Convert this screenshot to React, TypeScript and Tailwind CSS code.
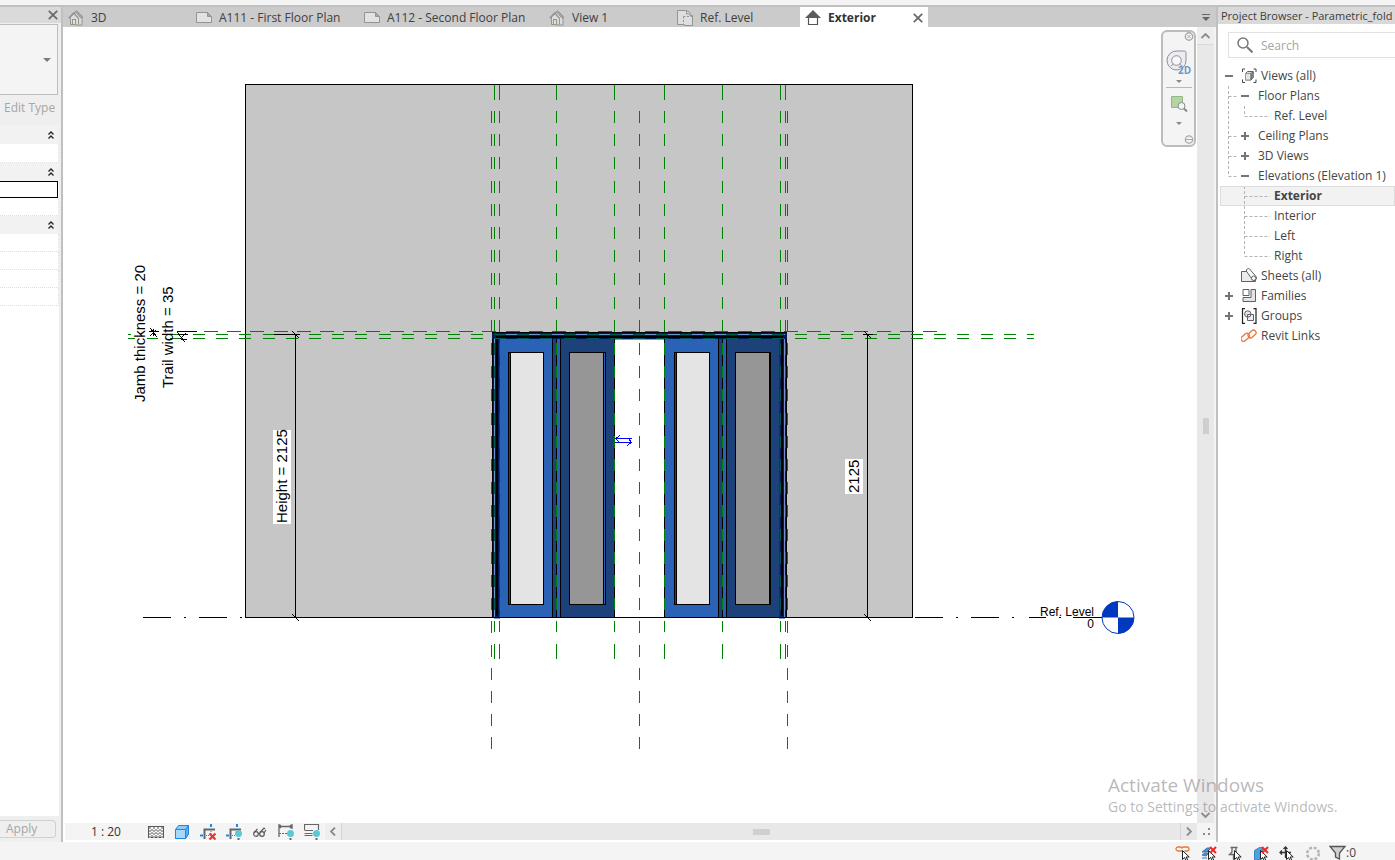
import React, { useState } from 'react';

type TabIcon = 'home' | 'sheet' | 'plan' | 'elevation';

interface ViewTab {
  name: string;
  icon: TabIcon;
  width: string;
}

const tabs: ViewTab[] = [
  { name: '3D', icon: 'home', width: 'w-32' },
  { name: 'A111 - First Floor Plan', icon: 'sheet', width: 'w-[168px]' },
  { name: 'A112 - Second Floor Plan', icon: 'sheet', width: 'w-[185px]' },
  { name: 'View 1', icon: 'home', width: 'w-32' },
  { name: 'Ref. Level', icon: 'plan', width: 'w-32' },
  { name: 'Exterior', icon: 'elevation', width: 'w-32' },
];

const TabGlyph = ({ icon }: { icon: TabIcon }) => {
  if (icon === 'home') {
    return (
      <svg width="16" height="16" viewBox="0 0 16 16" fill="none" stroke="#949494">
        <path d="M2.500 7v7.500h5V15h6.500V6.500L9 1 2.500 7z" fill="#dcdcdc" />
        <path d="M5 4 8.500.8 14.800 7l-1.600 1.200L8 2.500z" fill="#ababab" />
        <path d="M.7 8.200 5.500 3l5 5.200" strokeWidth="1.300" />
        <path d="M10.500 8v6.500" />
        <rect x="4.500" y="9.500" width="3" height="5" fill="#f5deb0" />
      </svg>
    );
  }
  if (icon === 'sheet') {
    return (
      <svg width="16" height="16" viewBox="0 0 16 16" fill="none" stroke="#949494">
        <path d="M.5 2.500h11l4 4v6H.5z" fill="#e2e2e2" />
        <path d="M11.500 2.500v4h4z" fill="#a4a4a4" />
      </svg>
    );
  }
  if (icon === 'plan') {
    return (
      <svg width="16" height="16" viewBox="0 0 16 16" fill="none" stroke="#949494">
        <path d="M.5.500h9l3.500 2v3h2.500v10h-8v-1h-7z" fill="#dedede" />
        <path d="M6.500 6.500h9M6.500 6.500v8" strokeDasharray="2 1.500" />
        <path d="M9.500 1v3h3" />
      </svg>
    );
  }
  return (
    <svg width="16" height="16" viewBox="0 0 16 16" fill="none">
      <path d="M3.500 7.500h9v7h-9z" fill="#fff" stroke="#555" strokeWidth="1.200" />
      <path d="M8 0l8 8H0z" fill="#5c5c5c" />
    </svg>
  );
};

const Cross = ({ color = '#6a6a6a' }: { color?: string }) => (
  <svg width="10" height="10" viewBox="0 0 10 10" stroke={color} strokeWidth="1.800">
    <path d="M.8.800l8.400 8.400M9.200.800.800 9.200" />
  </svg>
);

const DoubleChevron = () => (
  <svg width="6" height="8" viewBox="0 0 6 8" fill="none" stroke="#222" strokeWidth="1.300">
    <path d="M.5 3.500 3 1l2.500 2.500M.5 7.500 3 5l2.500 2.500" />
  </svg>
);

const Caret = () => (
  <svg width="8" height="4" viewBox="0 0 8 4" fill="#7c7c7c">
    <path d="M0 0h8L4 4z" />
  </svg>
);

const GroupHeader = ({ label }: { label: string }) => (
  <button aria-label={label} className="w-full h-[18px] bg-[#f2f2f2] flex items-center justify-end pr-[5px]">
    <DoubleChevron />
  </button>
);

const PropertiesPanel = () => (
  <aside className="w-[61px] shrink-0 bg-[#efefef] flex flex-col">
    <div className="h-4 bg-[#dadada] flex items-center justify-end pr-[3px]">
      <button aria-label="Close properties"><Cross /></button>
    </div>
    <div className="h-[71px] mr-[3px] mt-px border border-l-0 border-[#bdbdbd] bg-[#f4f4f4] flex items-center justify-end pr-[6px]">
      <button aria-label="Type selector"><Caret /></button>
    </div>
    <div className="h-[30px] pl-1 pb-1 flex items-center text-[#a6a6a6] whitespace-nowrap">
      <button>Edit Type</button>
    </div>
    <div className="flex-1 mr-0.5 bg-white border-t border-t-[#f2f2f2]">
      <GroupHeader label="Constraints" />
      <div className="h-[19px] border-b border-r border-dotted border-[#dedede]" />
      <GroupHeader label="Graphics" />
      <input aria-label="Value" className="block w-[58px] h-[17px] border border-l-0 border-black bg-white outline-none px-1" />
      <div className="h-[18px] border-b border-r border-dotted border-[#dedede]" />
      <GroupHeader label="Identity Data" />
      {[0, 1, 2, 3].map(row => (
        <div key={row} className="h-[18px] border-b border-r border-dotted border-[#dedede]" />
      ))}
    </div>
    <div className="h-[26px] pt-1 pr-[5px]">
      <button className="w-full h-[18px] border border-l-0 border-[#d0d0d0] rounded-r-sm flex items-center pl-[6px] text-[#a6a6a6]">
        Apply
      </button>
    </div>
  </aside>
);

const GREEN = '#008000';
const planeXs = [494, 499, 556, 614, 664, 722, 780, 785];
const centerXs = [491, 639, 787];

// One pair of leaves, shifted to its own side of the opening
const LeafPair = ({ dx }: { dx: number }) => (
  <g transform={`translate(${dx} 0)`}>
    <rect x="499" y="339" width="53" height="278" fill="#2a62b6" />
    <rect x="552" y="339" width="9" height="278" fill="#1e4278" />
    <rect x="557" y="339" width="3" height="278" fill="#2a62b6" />
    <rect x="561" y="339" width="53" height="278" fill="#1d4179" />
    <path d="M552.500 339V617M556.500 339V617M560.500 339V617" stroke="#000" />
    <rect x="508.500" y="352.500" width="35" height="252" fill="#1d4179" stroke="#000" />
    <rect x="510.500" y="352.500" width="33" height="252" fill="#e4e4e4" stroke="#000" />
    <rect x="569.500" y="352.500" width={dx ? 35 : 36} height="252" fill="#2a62b6" stroke="#000" />
    <rect x="569.500" y="352.500" width="34" height="252" fill="#969696" stroke="#000" />
  </g>
);

const Jamb = ({ x, flip }: { x: number; flip?: boolean }) => (
  <g transform={flip ? `translate(${x} 0) scale(-1 1)` : `translate(${x} 0)`}>
    <rect x="0" y="332" width="8" height="286" fill="#001c5c" />
    <rect x="0" y="332" width="1" height="285" fill="#000" />
    <rect x="2" y="334" width="1" height="284" fill="#6f8fd0" />
    <rect x="4" y="336" width="2" height="280" fill="#000" />
    <rect x="7" y="339" width="1" height="279" fill="#0a2f92" />
    <rect x="2" y="618" width="6" height="1" fill="#7a94d8" />
  </g>
);

const ElevationDrawing = () => (
  <svg
    viewBox="63 27 1134 796"
    className="block w-full h-full"
    fontFamily='"Liberation Sans", Arial, sans-serif'
    shapeRendering="crispEdges"
    role="img"
    aria-label="Exterior elevation"
  >
    <rect x="245.500" y="84.500" width="667" height="533" fill="#c6c6c6" stroke="#000" />
    <rect x="615" y="339" width="49" height="278" fill="#fff" />

    {/* Door leaves and frame */}
    <LeafPair dx={0} />
    <LeafPair dx={166} />
    <path d="M614.500 339V617M664.500 339V617" stroke="#000" />
    <Jamb x={492} />
    <Jamb x={787} flip />
    <rect x="492" y="332" width="295" height="7" fill="#001c5c" />
    <path d="M492 332.500H787" stroke="#000" />
    <rect x="496" y="336" width="287" height="2" fill="#000" />
    <path d="M494 334.500H785" stroke="#6f8fd0" />
    <path d="M615 339.500H664" stroke="#8496dc" />
    <path d="M494 334.500H785M494 338.500H785" stroke="#005a5a" strokeDasharray="12 11.200" />

    {/* Reference planes */}
    <g stroke={GREEN}>
      {planeXs.map(x => (
        <path key={x} d={`M${x + 0.5} 85V100M${x + 0.5} 644V659`} />
      ))}
      {planeXs.map(x => (
        <path key={`d${x}`} d={`M${x + 0.5} 111V332`} strokeDasharray="12 11.200" />
      ))}
      {planeXs.map(x => (
        <path
          key={`b${x}`}
          d={`M${x + 0.5} 343V617`}
          stroke={[494, 499, 780, 785].includes(x) ? '#005a5a' : GREEN}
          strokeDasharray="12 11.200"
        />
      ))}
      {planeXs.map(x => (
        <path key={`e${x}`} d={`M${x + 0.5} 621V632`} />
      ))}
      {centerXs.map(x => (
        <path key={x} d={`M${x + 0.5} 111V751`} strokeDasharray="12 11.200" />
      ))}
      <path d="M204 331.500H941" strokeDasharray="14 9.200" />
      <path d="M193 334.500H492M795 334.500H1034M193 338.500H492M795 338.500H1034" strokeDasharray="12 11.200" />
      <path d="M128 334.500H131M128 338.500H135M147 338.500H158M170 334.500H182M170 338.500H182" />
    </g>

    {/* Level line */}
    <path d="M143 617.500H245" stroke="#000" strokeDasharray="28 13 2 13" />
    <path d="M245 617.500H913" stroke="#000" />
    <path d="M915 617.500H1017" stroke="#000" strokeDasharray="28 13 2 13" />
    <path d="M1029 617.500H1046M1059 617.500H1061M1073 617.500H1102" stroke="#000" />

    {/* Dimensions */}
    <g stroke="#000" fill="none">
      <path d="M295.500 334V617M867.500 334V617" />
      <path d="M177 331.500H197M274 334.500H300M863 334.500H873" />
      <path d="M292 331l7 7M292 614l7 7M864 331l7 7M864 614l7 7" />
      <path d="M149 331.500H159M150 328l7 9M153 329v7M156 330l-6 6M177 332l8 10M180 334h8M181 339h6M186 333l-6 6" />
    </g>
    <rect x="273" y="430" width="18" height="94" fill="#fff" />
    <rect x="845" y="459" width="18" height="35" fill="#fff" />
    <g fontSize="15" fill="#000">
      <text transform="translate(145 402) rotate(-90)">Jamb thickness = 20</text>
      <text transform="translate(173 388) rotate(-90)">Trail width = 35</text>
      <text transform="translate(287 523) rotate(-90)">Height = 2125</text>
      <text transform="translate(859 493) rotate(-90)">2125</text>
    </g>

    {/* Flip control */}
    <path
      d="M616 438.500H632M615 442.500H631M620 435l-4 3.500 3 4M627 446l4-3.500-2-4"
      fill="none"
      stroke="#0000ff"
    />

    {/* Level head */}
    <g fontSize="12" textAnchor="end">
      <text x="1094" y="616">Ref. Level</text>
      <text x="1094" y="628">0</text>
    </g>
    <g shapeRendering="auto">
      <circle cx="1118" cy="617.500" r="16" fill="#fff" stroke="#0038c0" />
      <path d="M1118 617.500V601.500A16 16 0 0 0 1102 617.500zM1118 617.500V633.500A16 16 0 0 0 1134 617.500z" fill="#0038c0" />
    </g>
  </svg>
);

const NavigationBar = () => (
  <div className="absolute top-[3px] right-px w-[35px] h-[117px] rounded-md border-2 border-[#bcbcbc] bg-[#f4f4f4] flex flex-col items-center">
    <button aria-label="Close navigation bar" className="self-end">
      <svg width="10" height="10" viewBox="0 0 10 10" fill="none" stroke="#a8a8a8">
        <circle cx="5" cy="4.500" r="3.700" strokeWidth="1.400" />
        <path d="M3.500 3l3 3M6.500 3l-3 3" />
      </svg>
    </button>
    <button aria-label="Steering wheel 2D" className="mt-2">
      <svg width="26" height="26" viewBox="0 0 26 26" fill="none" stroke="#8f8f99">
        <path d="M11 1h7.500a1.500 1.500 0 0 1 1.500 1.500V11a9.500 9.500 0 1 1-9-10z" fill="#ececf2" />
        <circle cx="10.500" cy="10.500" r="4.800" fill="#f7f7f7" />
        <path d="M5 16l2.500-2M16 16l-2.500-2" />
        <text x="12" y="24" fontSize="10" fontWeight="700" fill="#6f97c8" stroke="none" fontFamily='"Open Sans", sans-serif'>2D</text>
      </svg>
    </button>
    <button aria-label="Steering wheel options" className="mt-1">
      <svg width="6" height="3" viewBox="0 0 8 4" fill="#8a8a8a"><path d="M0 0h8L4 4z" /></svg>
    </button>
    <div className="w-[26px] h-px bg-[#b8b8b8] mt-1" />
    <button aria-label="Zoom in region" className="mt-[7px]">
      <svg width="18" height="18" viewBox="0 0 18 18" fill="none">
        <path d="M1.500 1.500h11v11h-11z" fill="#b5d3a4" stroke="#93b883" />
        <circle cx="11.500" cy="11" r="3.500" fill="#f0f5f8" stroke="#8b8b8b" />
        <path d="M14 13.500l3 3" stroke="#8b8b8b" strokeWidth="2" />
      </svg>
    </button>
    <button aria-label="Zoom options" className="mt-[9px]">
      <svg width="6" height="3" viewBox="0 0 8 4" fill="#8a8a8a"><path d="M0 0h8L4 4z" /></svg>
    </button>
    <button aria-label="Customize" className="self-end mt-auto">
      <svg width="10" height="10" viewBox="0 0 10 10" fill="none" stroke="#a8a8a8">
        <circle cx="5" cy="4.500" r="3.700" strokeWidth="1.200" />
        <path d="M2 4.500h6" />
      </svg>
    </button>
  </div>
);

const VerticalScroll = () => (
  <div className="w-[17px] shrink-0 bg-[#e8e8e8] flex flex-col items-center justify-between">
    <button aria-label="Scroll up" className="w-full h-[18px] bg-[#eeeeee] border-b border-[#dadada] flex items-center justify-center">
      <svg width="9" height="6" viewBox="0 0 9 6" fill="none" stroke="#8a8a8a" strokeWidth="1.800"><path d="M.5 5l4-4 4 4" /></svg>
    </button>
    <div className="w-[6px] h-4 bg-[#cfcfcf]" />
    <button aria-label="Scroll down" className="w-full h-[17px] flex items-center justify-center">
      <svg width="9" height="6" viewBox="0 0 9 6" fill="none" stroke="#8a8a8a" strokeWidth="1.800"><path d="M.5 1l4 4 4-4" /></svg>
    </button>
  </div>
);

const CropLines = () => (
  <g>
    <path d="M4.500 15V5.500H15" stroke="#666" strokeWidth="2" />
    <path d="M11 0v3M0 11.500h3" stroke="#1e88e5" strokeWidth="2" />
    <path d="M6 11.500h3M11 7v3" stroke="#1e88e5" strokeDasharray="1 1" />
  </g>
);

const Bulb = () => (
  <g>
    <circle cx="12.500" cy="9.500" r="3.500" fill="#5cc8d4" />
    <path d="M11.500 14h2v2h-2z" fill="#666" />
  </g>
);

const checks = Array.from({ length: 28 }, (_, i) => ({
  x: 1 + Math.floor(i / 4) * 2,
  y: 3 + (i % 4) * 3 - (Math.floor(i / 4) % 2),
}));

const viewControls = [
  {
    name: 'Detail level',
    art: (
      <g shapeRendering="crispEdges">
        <rect x=".5" y="2.500" width="15" height="11" fill="#f8f8f8" stroke="#555" />
        {checks.filter(c => c.y > 2 && c.y < 13).map(c => (
          <rect key={`${c.x}-${c.y}`} x={c.x} y={c.y} width="2" height="2" fill="#a8a8a8" />
        ))}
      </g>
    ),
  },
  {
    name: 'Visual style',
    art: (
      <g stroke="#1e88e5">
        <path d="M1.500 5.500l3-4h10v8.500l-3 4.500h-10z" fill="#90caf9" />
        <path d="M1.500 5.500h10v9h-10z" fill="#a9d8f8" />
        <path d="M11.500 5.500l3-4v8.500l-3 4.500z" fill="#5badee" />
      </g>
    ),
  },
  {
    name: 'Crop view',
    art: (
      <g>
        <CropLines />
        <path d="M9.500 9.500l6 6M15.500 9.500l-6 6" stroke="#f03030" strokeWidth="2.200" />
      </g>
    ),
  },
  { name: 'Show crop region', art: <g><CropLines /><Bulb /></g> },
  {
    name: 'Temporary hide/isolate',
    art: (
      <g stroke="#5a5a5a" strokeWidth="1.200">
        <circle cx="4" cy="10" r="2.300" />
        <circle cx="10" cy="10" r="2.300" />
        <path d="M2 8.500L5.500 5M8 8.500L12 4l1 1M6 9.500h2M12 9l2-3" />
      </g>
    ),
  },
  {
    name: 'Reveal constraints',
    art: (
      <g stroke="#666">
        <path d="M1 0v13M14 0v5M1 2.500h13M3 1l-2 1.500L3 4M12 1l2 1.500L12 4" strokeWidth="1.300" />
        <path d="M1 9.500h8" strokeDasharray="2 1" />
        <g stroke="none"><Bulb /></g>
      </g>
    ),
  },
  {
    name: 'Temporary view properties',
    art: (
      <g stroke="#666">
        <path d="M.5 6V.500h14V6M.5 6.500H9M.5 9.500h8M.5 11.500h8" strokeWidth="1.200" />
        <g stroke="none"><Bulb /></g>
      </g>
    ),
  },
];

const ViewControlBar = () => (
  <div className="h-[17px] ml-0.5 flex bg-[#f4f4f4]">
    <button className="w-[82px] text-center text-[#333]">1 : 20</button>
    <div className="flex items-center gap-[10px] pl-px pr-[5px]">
      {viewControls.map(control => (
        <button key={control.name} aria-label={control.name} title={control.name}>
          <svg width="16" height="16" viewBox="0 0 16 16" fill="none">{control.art}</svg>
        </button>
      ))}
    </div>
    <div className="flex-1 flex items-center justify-between bg-[#e8e8e8]">
      <button aria-label="Scroll left" className="w-[17px] h-full bg-[#eeeeee] border-r border-[#d4d4d4] flex items-center justify-center">
        <svg width="6" height="9" viewBox="0 0 6 9" fill="none" stroke="#8a8a8a" strokeWidth="1.800"><path d="M5 .5l-4 4 4 4" /></svg>
      </button>
      <div className="w-[17px] h-[6px] bg-[#cfcfcf]" />
      <button aria-label="Scroll right" className="w-[17px] h-full border-l border-[#d4d4d4] flex items-center justify-center">
        <svg width="6" height="9" viewBox="0 0 6 9" fill="none" stroke="#8a8a8a" strokeWidth="1.800"><path d="M1 .5l4 4-4 4" /></svg>
      </button>
    </div>
    <div className="w-[19px] flex items-end justify-center pb-1">
      <svg width="8" height="8" viewBox="0 0 8 8" fill="#8a8a8a">
        <path d="M5 0h2v2H5zM5 5h2v2H5zM0 5h2v2H0z" />
      </svg>
    </div>
  </div>
);

type Guide = 'tee' | 'end' | 'line' | 'none';

interface TreeNode {
  label: string;
  level: 0 | 1 | 2;
  expand?: 'plus' | 'minus';
  guides?: Guide[];
  icon?: 'views' | 'sheets' | 'families' | 'groups' | 'links';
}

const tree: TreeNode[] = [
  { label: 'Views (all)', level: 0, expand: 'minus', icon: 'views' },
  { label: 'Floor Plans', level: 1, expand: 'minus', guides: ['tee'] },
  { label: 'Ref. Level', level: 2, guides: ['line', 'end'] },
  { label: 'Ceiling Plans', level: 1, expand: 'plus', guides: ['tee'] },
  { label: '3D Views', level: 1, expand: 'plus', guides: ['tee'] },
  { label: 'Elevations (Elevation 1)', level: 1, expand: 'minus', guides: ['end'] },
  { label: 'Exterior', level: 2, guides: ['none', 'tee'] },
  { label: 'Interior', level: 2, guides: ['none', 'tee'] },
  { label: 'Left', level: 2, guides: ['none', 'tee'] },
  { label: 'Right', level: 2, guides: ['none', 'end'] },
  { label: 'Sheets (all)', level: 0, icon: 'sheets' },
  { label: 'Families', level: 0, expand: 'plus', icon: 'families' },
  { label: 'Groups', level: 0, expand: 'plus', icon: 'groups' },
  { label: 'Revit Links', level: 0, icon: 'links' },
];

const GuideLine = ({ kind, width, x }: { kind: Guide; width: number; x: number }) => (
  <svg width={width} height="20" fill="none" stroke="#b4b4b4" strokeDasharray="3 2" className="shrink-0">
    {kind !== 'none' && <path d={`M${x} 0V${kind === 'end' ? 10 : 20}`} />}
    {(kind === 'tee' || kind === 'end') && <path d={`M${x} 10.500H${width}`} />}
  </svg>
);

const Expander = ({ kind }: { kind?: 'plus' | 'minus' }) => (
  <svg width="8" height="8" viewBox="0 0 8 8" stroke="#757575" strokeWidth="2">
    {kind && <path d="M0 4h8" />}
    {kind === 'plus' && <path d="M4 0v8" />}
  </svg>
);

const TreeIcon = ({ icon }: { icon: TreeNode['icon'] }) => (
  <svg width="16" height="16" viewBox="0 0 16 16" fill="none" stroke="#606060" className="shrink-0">
    {icon === 'views' && (
      <g>
        <path d="M4 1H1.500v3M12.500 1h2.500v3M1.500 11.500v3H4M15 11.500v3h-2.500" stroke="#444" />
        <path d="M4.500 5.500l2-2h5.500v6l-2 2.500H4.500z" fill="#dedede" />
        <path d="M4.500 5.500H10V12H4.500z" fill="#e4e4e4" stroke="#999" />
        <path d="M10 5.500l2-2v6L10 12z" fill="#999" />
      </g>
    )}
    {icon === 'sheets' && (
      <g>
        <path d="M.5 3.500h8l6 5v5H.5z" fill="#ececec" />
        <path d="M5.500 3.200A2 2 0 0 1 8.500.900L15 8.500a2.500 2.500 0 0 1-3.500 3.500z" fill="#fff" />
        <circle cx="12.700" cy="10.200" r="2.200" fill="#fff" />
      </g>
    )}
    {icon === 'families' && (
      <g>
        <path d="M2 1.500h6v6H2z" fill="#fff" />
        <path d="M10 1.500h4.500v12H2v-4h8z" fill="#e4e4e4" />
      </g>
    )}
    {icon === 'groups' && (
      <g>
        <path d="M4 .7H1.500v14.600H4M12.500.700H15v14.600h-2.500" stroke="#222" strokeWidth="1.200" />
        <path d="M6.500 6.500h6v6h-6z" fill="#e8eef4" />
        <circle cx="6.800" cy="6" r="3.200" fill="#e6e6e6" />
        <path d="M6.500 9V6.500H9.500" />
      </g>
    )}
    {icon === 'links' && (
      <g stroke="#e8793a" strokeWidth="1.300">
        <rect x="-.5" y="7" width="9.500" height="5" rx="2.500" transform="rotate(-42 4 9.500)" />
        <rect x="6.500" y="3.500" width="9" height="5" rx="2.500" transform="rotate(-42 11 6)" />
      </g>
    )}
  </svg>
);

const ProjectBrowser = () => {
  const [selected, setSelected] = useState('Exterior');

  return (
    <aside className="w-[177px] shrink-0 bg-white">
      <h2 className="h-[17px] pl-[3px] bg-[#d9d9d9] text-[#3c3c3c] text-[11px] leading-[18px] whitespace-nowrap">
        Project Browser - Parametric_fold
      </h2>
      <div className="mt-2 ml-[10px] h-[26px] border border-r-0 border-[#e2e2e2] flex items-center gap-2 pl-2">
        <svg width="16" height="16" viewBox="0 0 16 16" fill="none" stroke="#777" className="shrink-0">
          <circle cx="6" cy="6" r="5" strokeWidth="1.500" />
          <path d="M10 10l5.500 5.500" strokeWidth="2" />
        </svg>
        <input
          aria-label="Search"
          placeholder="Search"
          className="min-w-0 flex-1 pt-0.5 bg-transparent outline-none placeholder:text-[#a4a4a4]"
        />
      </div>
      <ul className="mt-2 ml-0.5 text-[#454545]">
        {tree.map((node, index) => (
          <li key={index}>
            <button
              onClick={() => setSelected(node.label)}
              className={`w-full h-5 flex items-center whitespace-nowrap ${
                selected === node.label && node.level === 2
                  ? 'bg-[#f2f2f2] font-bold outline outline-1 -outline-offset-1 outline-[#dcdcdc]'
                  : ''
              }`}
            >
              {node.level === 0 && (
                <>
                  <span className="w-[21px] pl-[5px]"><Expander kind={node.expand} /></span>
                  <TreeIcon icon={node.icon} />
                </>
              )}
              {node.level === 1 && (
                <>
                  <GuideLine kind={node.guides![0]} width={18} x={8.5} />
                  <span className="w-4 pl-[3px]"><Expander kind={node.expand} /></span>
                </>
              )}
              {node.level === 2 && (
                <>
                  <GuideLine kind={node.guides![0]} width={18} x={8.5} />
                  <GuideLine kind={node.guides![1]} width={32} x={6.5} />
                </>
              )}
              <span className="ml-1">{node.label}</span>
            </button>
          </li>
        ))}
      </ul>
    </aside>
  );
};

const Cursor = () => <path d="M7.500 4.500v9l2.200-2 1.600 3.500 1.500-.7-1.600-3.300h3z" fill="#fff" stroke="#222" />;
const RedCross = () => <path d="M9 1l6 6M15 1L9 7" stroke="#f02828" strokeWidth="2" />;

const statusButtons = [
  {
    name: 'Select links',
    art: <g><path d="M7 5H3a2 2 0 0 1 0-4h2.500a2 2 0 0 1 1.500 1 2 2 0 0 1 1.500-1H12a2 2 0 0 1 0 4H9.500" stroke="#e8793a" strokeWidth="1.300" /><Cursor /></g>,
  },
  {
    name: 'Select underlay elements',
    art: <g><path d="M1 6l5-4h4L6 6zM1 9l3-2h4l-3 3zM1 12h5" fill="#4a8fc8" stroke="#3a7ab8" /><Cursor /><RedCross /></g>,
  },
  {
    name: 'Select pinned elements',
    art: <g><path d="M3.500 1.500h7M5 2v4l-2.500 2.500h8L9 6V2M6.500 9v5" stroke="#666" strokeWidth="1.300" /><Cursor /></g>,
  },
  {
    name: 'Select elements by face',
    art: <g><path d="M1.500 4.500l5-3h3v11l-8 2z" fill="#4aa3df" stroke="#3a86bd" /><Cursor /><RedCross /></g>,
  },
  {
    name: 'Drag elements on selection',
    art: <g><path d="M6.500 1v11M1 6.500h11M4.500 3l2-2 2 2M3 4.500l-2 2 2 2" stroke="#333" strokeWidth="1.300" /><Cursor /></g>,
  },
  {
    name: 'Background processes',
    art: <circle cx="8" cy="7.500" r="5.800" stroke="#b4b4b4" strokeWidth="2.600" strokeDasharray="2.800 1.755" />,
  },
];

const StatusBar = () => (
  <footer className="h-[18px] shrink-0 bg-[#f4f4f4] flex justify-end gap-2 pt-1 pr-[39px] overflow-hidden">
    <div className="flex gap-[10px]">
      {statusButtons.map(button => (
        <button key={button.name} aria-label={button.name} title={button.name}>
          <svg width="16" height="16" viewBox="0 0 16 16" fill="none">{button.art}</svg>
        </button>
      ))}
    </div>
    <button aria-label="Filter, 0 selected" className="flex items-center text-[#444] leading-4">
      <svg width="17" height="16" viewBox="0 0 17 16" fill="none" stroke="#555">
        <path d="M1 1.500h15l-5.500 6.500v6l-4-2V8z" fill="#d0d0d0" strokeWidth="1.300" />
      </svg>
      <span className="whitespace-nowrap">:0</span>
    </button>
  </footer>
);

const App = () => {
  const [activeTab, setActiveTab] = useState('Exterior');

  return (
    <div className="relative h-screen flex flex-col overflow-hidden bg-white font-['Open_Sans','Segoe_UI',sans-serif] text-xs leading-4">
      <div className="h-[7px] shrink-0 bg-[#f4f4f4] border-b-2 border-[#c0c0c0]" />

      <div className="flex-1 min-h-0 flex">
        <PropertiesPanel />

        <main className="flex-1 min-w-0 flex flex-col pb-0.5 border-x-2 border-[#c0c0c0]">
          <div role="tablist" className="h-5 shrink-0 flex bg-[#cbcbcb]">
            {tabs.map(tab => (
              <div
                key={tab.name}
                className={`${tab.width} shrink-0 flex items-center justify-between px-[5px] pt-0.5 ${
                  activeTab === tab.name ? 'bg-white font-bold text-[#333]' : 'text-[#404040]'
                }`}
              >
                <button
                  role="tab"
                  aria-selected={activeTab === tab.name}
                  onClick={() => setActiveTab(tab.name)}
                  className="flex items-center gap-[7px] whitespace-nowrap"
                >
                  <TabGlyph icon={tab.icon} />
                  {tab.name}
                </button>
                {activeTab === tab.name && (
                  <button aria-label="Close tab"><Cross /></button>
                )}
              </div>
            ))}
            <button aria-label="Tab list" className="ml-auto pr-[6px]">
              <svg width="8" height="7" viewBox="0 0 8 7" fill="#666">
                <path d="M0 0h8v1H0zM0 3h8L4 7z" />
              </svg>
            </button>
          </div>

          <div className="flex-1 min-h-0 flex">
            <div className="relative flex-1 min-w-0">
              <ElevationDrawing />
              <NavigationBar />
            </div>
            <VerticalScroll />
            <div className="w-0.5 shrink-0 bg-[#f4f4f4]" />
          </div>

          <ViewControlBar />
        </main>

        <ProjectBrowser />
      </div>

      <StatusBar />

      <div className="absolute right-[51px] bottom-[43px] w-[236px] whitespace-nowrap text-[#7d7d7d]/55 pointer-events-none">
        <p className="text-[19px] leading-6">Activate Windows</p>
        <p className="text-sm leading-5">Go to Settings to activate Windows.</p>
      </div>
    </div>
  );
};

export default App;
